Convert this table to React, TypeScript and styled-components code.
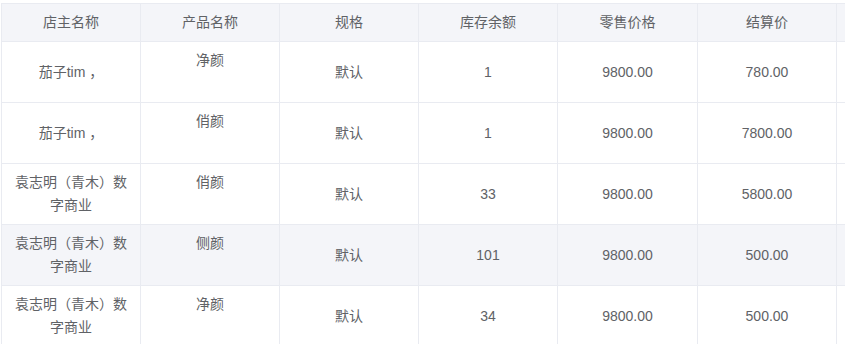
import React from "react";
import styled, { createGlobalStyle } from "styled-components";

const GlobalStyle = createGlobalStyle`
  html, body {
    margin: 0;
    padding: 0;
    background: #ffffff;
  }
  body {
    font-family: "Liberation Sans", "Noto Sans CJK SC", sans-serif;
    font-size: 14px;
    color: #606266;
  }
`;

const Viewport = styled.div`
  width: 845px;
  height: 344px;
  overflow: hidden;
  padding: 3px 0 0 1px;
  box-sizing: border-box;
`;

const Table = styled.div`
  display: flex;
  flex-direction: column;
  width: max-content;
  border-top: 1px solid #e9ebf1;
  border-left: 1px solid #e9ebf1;
`;

const Row = styled.div<{ $header?: boolean; $highlight?: boolean }>`
  display: flex;
  height: ${(p) => (p.$header ? 38 : 61)}px;
  background: ${(p) => (p.$header || p.$highlight ? "#f4f5f9" : "#ffffff")};
`;

const Cell = styled.div<{ $w: number; $top?: boolean }>`
  box-sizing: border-box;
  width: ${(p) => p.$w}px;
  flex: none;
  border-right: 1px solid #e9ebf1;
  border-bottom: 1px solid #e9ebf1;
  display: flex;
  justify-content: center;
  align-items: ${(p) => (p.$top ? "flex-start" : "center")};
  padding: ${(p) => (p.$top ? "7px 10px 0" : "0 10px")};
  text-align: center;
  line-height: 23px;
  color: #606266;
`;

const HeadCell = styled(Cell)`
  color: #606266;
`;

const Punct = styled.span`
  padding-left: 4px;
`;

const widths = [139, 139, 139, 139, 140, 139, 160];
const headers = ["店主名称", "产品名称", "规格", "库存余额", "零售价格", "结算价", ""];

type Item = {
  owner: React.ReactNode;
  product: string;
  spec: string;
  stock: string;
  retail: string;
  settle: string;
  highlight?: boolean;
};

const tim = (
  <span>
    茄子tim<Punct>，</Punct>
  </span>
);

const rows: Item[] = [
  { owner: tim, product: "净颜", spec: "默认", stock: "1", retail: "9800.00", settle: "780.00" },
  { owner: tim, product: "俏颜", spec: "默认", stock: "1", retail: "9800.00", settle: "7800.00" },
  { owner: "袁志明（青木）数字商业", product: "俏颜", spec: "默认", stock: "33", retail: "9800.00", settle: "5800.00" },
  { owner: "袁志明（青木）数字商业", product: "侧颜", spec: "默认", stock: "101", retail: "9800.00", settle: "500.00", highlight: true },
  { owner: "袁志明（青木）数字商业", product: "净颜", spec: "默认", stock: "34", retail: "9800.00", settle: "500.00" },
];

export default function App() {
  return (
    <Viewport>
      <GlobalStyle />
      <Table>
        <Row $header>
          {headers.map((h, i) => (
            <HeadCell key={i} $w={widths[i]}>
              {h}
            </HeadCell>
          ))}
        </Row>
        {rows.map((r, i) => (
          <Row key={i} $highlight={r.highlight}>
            <Cell $w={widths[0]}>{r.owner}</Cell>
            <Cell $w={widths[1]} $top>
              {r.product}
            </Cell>
            <Cell $w={widths[2]}>{r.spec}</Cell>
            <Cell $w={widths[3]}>{r.stock}</Cell>
            <Cell $w={widths[4]}>{r.retail}</Cell>
            <Cell $w={widths[5]}>{r.settle}</Cell>
            <Cell $w={widths[6]} />
          </Row>
        ))}
      </Table>
    </Viewport>
  );
}
